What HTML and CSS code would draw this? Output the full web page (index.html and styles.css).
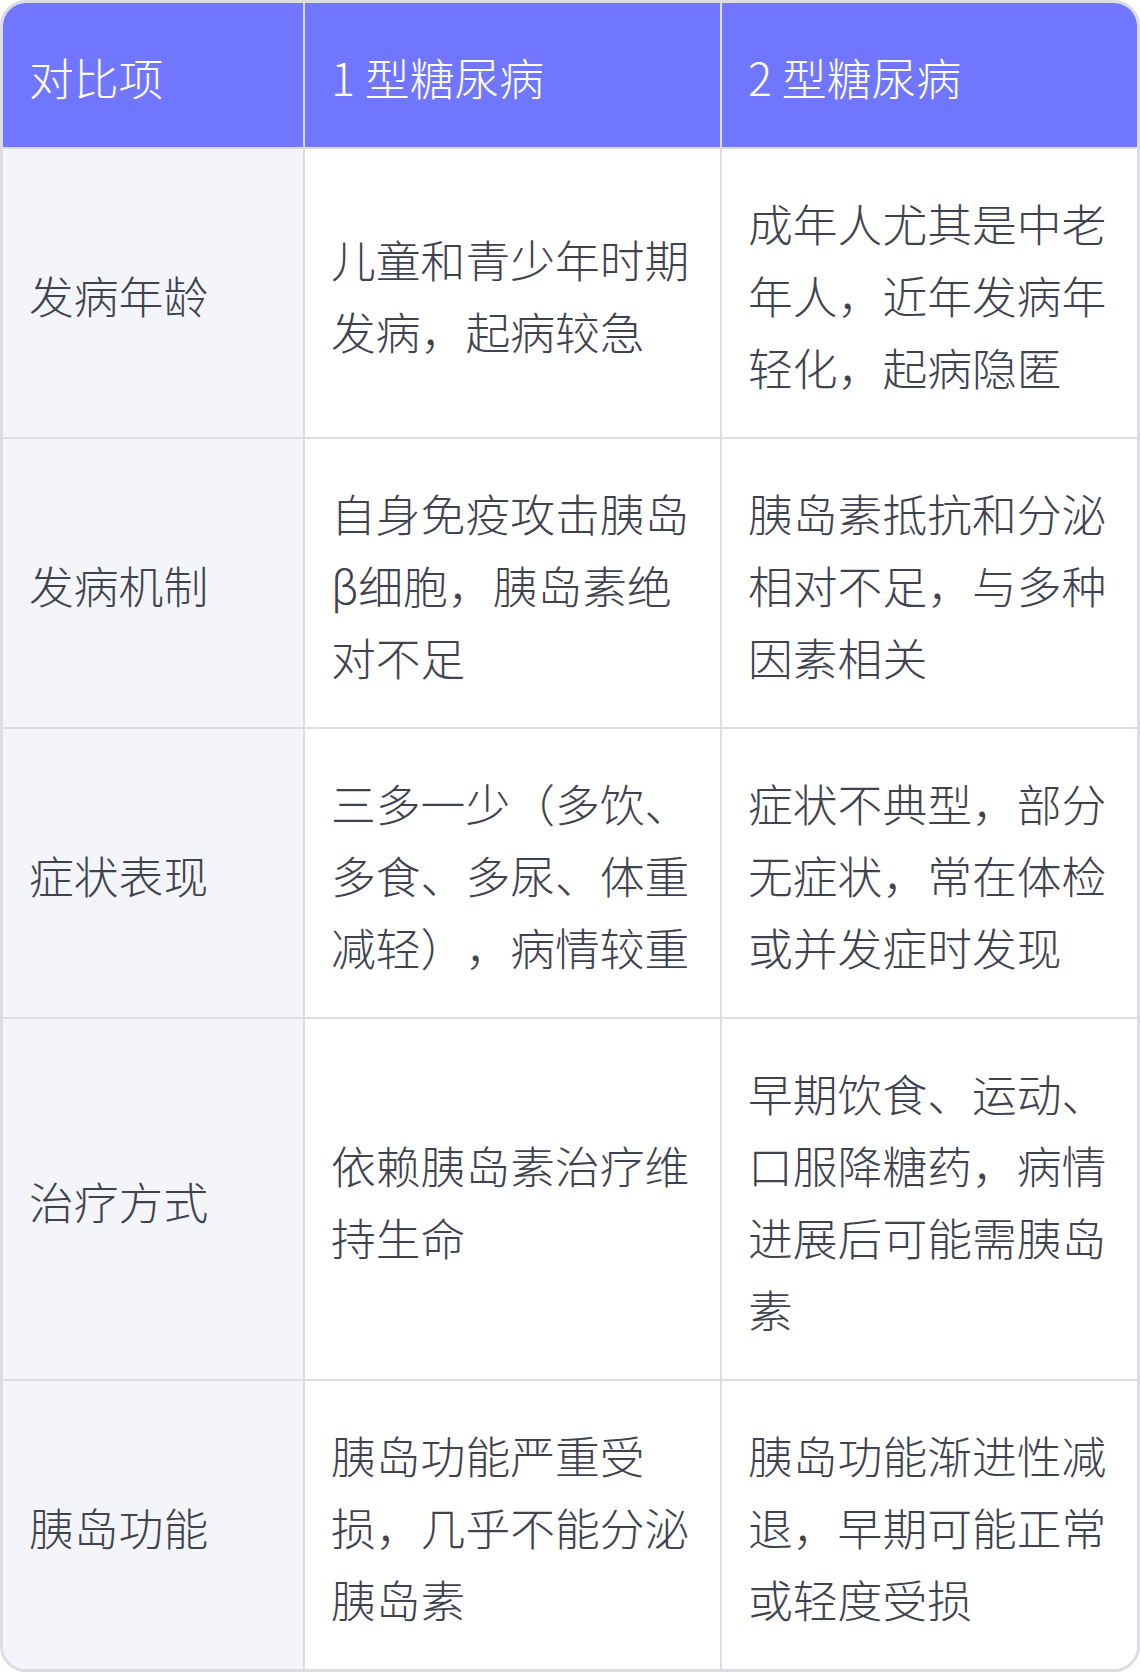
FILE: index.html
```html
<!DOCTYPE html>
<html lang="zh-CN">
<head>
<meta charset="utf-8">
<title>1 型糖尿病与 2 型糖尿病对比</title>
<link rel="stylesheet" href="styles.css">
</head>
<body>
<div class="frame">
  <div class="grid" role="table">
    <div class="cell head" role="columnheader">对比项</div>
    <div class="cell head" role="columnheader">1 型糖尿病</div>
    <div class="cell head last-col" role="columnheader">2 型糖尿病</div>

    <div class="cell label" role="rowheader">发病年龄</div>
    <div class="cell" role="cell">儿童和青少年时期发病，起病较急</div>
    <div class="cell last-col" role="cell">成年人尤其是中老年人，近年发病年轻化，起病隐匿</div>

    <div class="cell label" role="rowheader">发病机制</div>
    <div class="cell" role="cell">自身免疫攻击胰岛β细胞，胰岛素绝对不足</div>
    <div class="cell last-col" role="cell">胰岛素抵抗和分泌相对不足，与多种因素相关</div>

    <div class="cell label" role="rowheader">症状表现</div>
    <div class="cell" role="cell">三多一少（多饮、多食、多尿、体重减轻），病情较重</div>
    <div class="cell last-col" role="cell">症状不典型，部分无症状，常在体检或并发症时发现</div>

    <div class="cell label" role="rowheader">治疗方式</div>
    <div class="cell" role="cell">依赖胰岛素治疗维持生命</div>
    <div class="cell last-col" role="cell">早期饮食、运动、口服降糖药，病情进展后可能需胰岛素</div>

    <div class="cell label last-row" role="rowheader">胰岛功能</div>
    <div class="cell last-row" role="cell">胰岛功能严重受损，几乎不能分泌胰岛素</div>
    <div class="cell last-col last-row" role="cell">胰岛功能渐进性减退，早期可能正常或轻度受损</div>
  </div>
</div>
</body>
</html>
```

FILE: styles.css
```css
html, body {
  margin: 0;
  padding: 0;
  background: #ffffff;
}

body {
  width: 1140px;
  height: 1672px;
  font-family: "Noto Sans CJK SC", "Noto Sans", sans-serif;
  font-weight: 300;
  font-kerning: none;
  text-spacing-trim: space-all;
}

.frame {
  box-sizing: border-box;
  width: 1140px;
  height: 1672px;
  border: 3px solid #dcdde3;
  border-radius: 26px;
  overflow: hidden;
}

.grid {
  display: grid;
  grid-template-columns: 302px 417px 415px;
}

.cell {
  box-sizing: border-box;
  display: flex;
  align-items: center;
  padding: 38px 18px 34px 26px;
  font-size: 44.8px;
  line-height: 72px;
  color: #3f4350;
  background: #ffffff;
  border-right: 2px solid #dcdde3;
  border-bottom: 2px solid #dcdde3;
  font-feature-settings: "kern" 0, "palt" 0, "halt" 0;
  text-spacing-trim: space-all;
}

.head {
  background: #7176ff;
  color: #ffffff;
}

.label {
  background: #f4f5f9;
}

.last-col {
  border-right: none;
}

.last-row {
  border-bottom: none;
}
```
